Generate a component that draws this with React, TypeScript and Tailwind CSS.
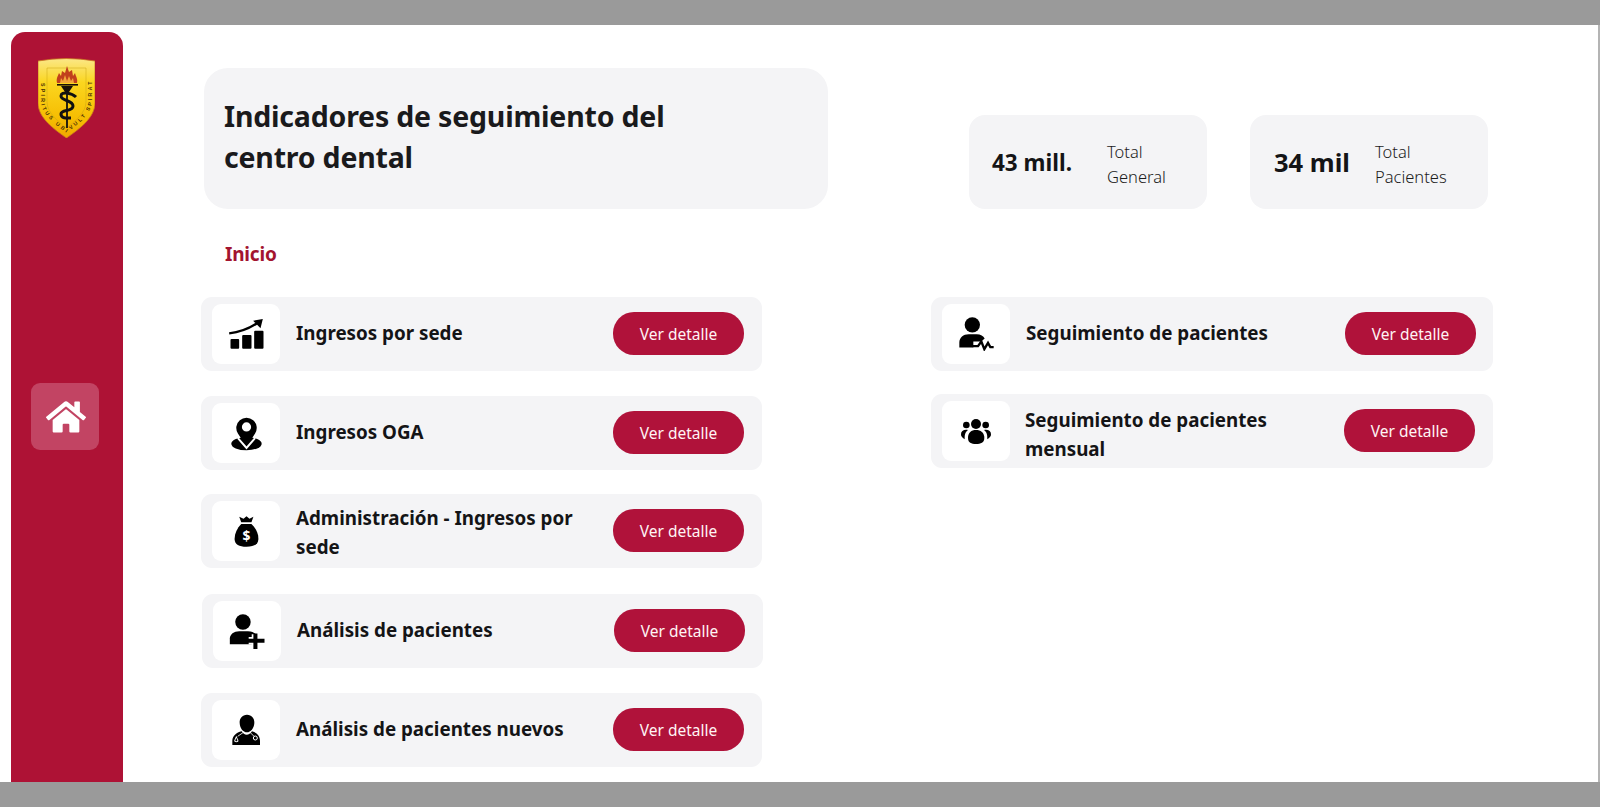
import React from "react";
import { FaHome } from "react-icons/fa";

const font = "[font-family:'Noto_Sans',sans-serif]";

function ChartIcon() {
  return (
    <svg width="35" height="30" viewBox="118 95 104 90" fill="#000">
      <rect x="122" y="155" width="26" height="29" rx="3" />
      <rect x="157" y="143" width="28" height="41" rx="3" />
      <rect x="193" y="130" width="28" height="54" rx="3" />
      <path d="M118 138C150 134 178 124 204 106" fill="none" stroke="#000" strokeWidth="7" />
      <path d="M190 100L219 95L212 123Z" />
    </svg>
  );
}
function PinIcon() {
  return (
    <svg width="31" height="35" viewBox="122 384 94 104" fill="#000">
      <ellipse cx="169" cy="467" rx="46" ry="20" />
      <path fillRule="evenodd" d="M169 476L143 436A31 31 0 1 1 195 436ZM169 402A14 14 0 1 0 169.010 430A14 14 0 1 0 169 402Z" />
      <path d="M143 450L169 480L195 450" fill="none" stroke="#fff" strokeWidth="6" />
      <path d="M146 436L169 472L192 436Z" />
    </svg>
  );
}
function BagIcon() {
  return (
    <svg width="25" height="31" viewBox="132 84 74 94" fill="#000">
      <path d="M147 86L160 92L169 85L178 92L190 86L184 103H153Z" />
      <path d="M153 108H184C198 122 206 138 205 155C204 170 192 177 169 177C146 177 134 170 133 155C132 138 140 122 153 108Z" />
      <text x="169" y="159" textAnchor="middle" fontSize="42" fontWeight="700" fill="#fff" fontFamily="'Noto Sans',sans-serif">$</text>
    </svg>
  );
}
function UserPlusIcon() {
  return (
    <svg width="36" height="35" viewBox="120 377 106 104" fill="#000">
      <circle cx="161" cy="401" r="23" />
      <path d="M122 467V450C122 437 134 428 150 428H176C186 428 194 432 198 436V467Z" />
      <path d="M198 437V476M178 456.500H220" stroke="#fff" strokeWidth="22" fill="none" />
      <path d="M198 435V481M174 456.500H225" stroke="#000" strokeWidth="12" fill="none" />
    </svg>
  );
}
function DoctorIcon() {
  return (
    <svg width="28" height="32" viewBox="127 680 84 94" fill="#000">
      <path d="M172 681C186 681 195 692 194 706C193 722 183 734 172 734C160 734 151 722 150 706C149 692 158 681 172 681Z" />
      <path d="M128 772V760C128 745 140 735 156 731C160 738 165 741 171 741C177 741 183 738 187 731C202 735 211 745 211 760V772Z" />
      <path d="M140 744L134 758C131 766 149 766 146 758Z" fill="#fff" />
      <path d="M140 750L137 758C136 762 144 762 143 758Z" />
      <circle cx="197" cy="751" r="6" fill="none" stroke="#fff" strokeWidth="3" />
      <path d="M160 735L144 746M182 735L193 746" stroke="#fff" strokeWidth="2.500" fill="none" />
    </svg>
  );
}
function FollowIcon() {
  return (
    <svg width="35" height="34" viewBox="117 87 105 101" fill="#000">
      <circle cx="157" cy="110" r="23" />
      <path d="M118 178V163C118 148 130 138 146 138H170C182 138 190 143 194 151L184 160H160V178Z" />
      <path d="M158 174H174L184 160L193 183L204 164L211 177H221" fill="none" stroke="#000" strokeWidth="7" />
    </svg>
  );
}
function GroupIcon() {
  return (
    <svg width="30" height="25" viewBox="125 395 90 75" fill="#000">
      <circle cx="141" cy="413" r="10" />
      <circle cx="199" cy="413" r="10" />
      <path d="M125 441C125 431 133 426 146 428C136 436 136 444 136 456C128 451 125 447 125 441Z" />
      <path d="M215 441C215 431 207 426 194 428C204 436 204 444 204 456C212 451 215 447 215 441Z" />
      <circle cx="170" cy="410" r="15" />
      <path d="M146 452C146 436 156 428 170 428C184 428 195 436 195 452C195 466 184 470 170 470C156 470 146 466 146 452Z" />
    </svg>
  );
}

const L = "w-[561px] pr-[18px]";

function Row({ icon, label, cls, labelCls }: { icon: React.ReactNode; label: string; cls: string; labelCls: string }) {
  return (
    <div className={`flex h-[74px] items-center rounded-[11px] bg-[#f4f4f6] pl-[11px] ${cls}`}>
      <div className="flex h-[60px] w-[68px] shrink-0 items-center justify-center rounded-[9px] bg-white">{icon}</div>
      <div className={`text-[18.800px] font-bold leading-[29px] text-[#141416] ${labelCls}`}>{label}</div>
      <button className="mb-[2px] ml-auto h-[43px] w-[131px] shrink-0 rounded-[21px] bg-[#b0123a] pt-[4px] text-[15.500px] text-[#fff4f4]">Ver detalle</button>
    </div>
  );
}

function Stat({ value, valueCls, a, b, cls }: { value: string; valueCls: string; a: string; b: string; cls: string }) {
  return (
    <div className={`flex h-[94px] w-[238px] items-center rounded-[16px] bg-[#f4f4f6] ${cls}`}>
      <div className={`font-bold text-[#141416] ${valueCls}`}>{value}</div>
      <div className="mt-[4px] text-[16.500px] font-light leading-[25px] text-[#1c1c1c]">
        {a}
        <br />
        {b}
      </div>
    </div>
  );
}

function Shield() {
  return (
    <svg width="57" height="80" viewBox="0 0 57 80">
      <defs>
        <linearGradient id="g" x1="0" y1="0" x2="0" y2="1">
          <stop offset="0" stopColor="#fbe787" />
          <stop offset=".3" stopColor="#fbd61f" />
          <stop offset=".75" stopColor="#f6bd02" />
          <stop offset="1" stopColor="#f0a800" />
        </linearGradient>
      </defs>
      <path d="M0 3Q28 -2 57 3V45C57 60 40 72 28.500 80C17 72 0 60 0 45Z" fill="url(#g)" stroke="#c9781e" strokeWidth=".8" />
      <path d="M9 10H48V44C48 55 36 64 28.500 70C21 64 9 55 9 44Z" fill="none" stroke="#c9a416" strokeWidth=".5" />
      <path d="M19 25C18 20 20 18 21 15L23 18L24 13L27 15L29 8L31 14L34 12L35 18L37 15C38 19 40 21 39 25Z" fill="#c1401c" />
      <path d="M22 25L23 20L25 23L27 17L29 23L31 18L33 23L35 20L36 25Z" fill="#f2a63a" />
      <rect x="19" y="26" width="21" height="1.600" fill="#1a1208" />
      <path d="M23 28H35L31 34H27Z" fill="#1a1208" />
      <path d="M29 32V70" stroke="#111" strokeWidth="1.800" />
      <path d="M38 39C34 35 23 33 23 38C23 43 35 42 35 48C35 54 23 51 23 56C23 61 30 60 33 60" fill="none" stroke="#111" strokeWidth="3" />
      <path id="arc" d="M3 25V44C4 57 19 68 28.500 75C38 68 53 57 54 44V25" fill="none" />
      <text fontSize="5.200" fontWeight="700" fill="#4a3205" fontFamily="'Liberation Sans',sans-serif">
        <textPath href="#arc" textLength="122" lengthAdjust="spacing">SPIRITUS UBI VULT SPIRAT</textPath>
      </text>
    </svg>
  );
}

export default function App() {
  return (
    <div className={`flex h-[807px] w-[1600px] flex-col overflow-hidden bg-white ${font}`}>
      <div className="h-[25px] shrink-0 bg-[#9a9a9a]" />
      <div className="flex min-h-0 flex-1 overflow-hidden bg-white">
        <aside className="ml-[11px] mt-[7px] flex w-[112px] shrink-0 flex-col items-center rounded-t-[14px] bg-[#ae1235]">
          <div className="ml-[-1px] mt-[26px]">
            <Shield />
          </div>
          <div className="ml-[-5px] mt-[245px] flex h-[67px] w-[68px] items-center justify-center rounded-[9px] bg-[#c24463]">
            <FaHome className="ml-[2px] text-white" size={40} />
          </div>
        </aside>
        <main className="ml-[78px] flex flex-1 flex-col">
          <div className="ml-[3px] mt-[43px] flex items-end">
            <div className="flex h-[141px] w-[624px] items-center rounded-[24px] bg-[#f4f4f6] pb-[4px] pl-[20px]">
              <h1 className="text-[28.500px] font-bold leading-[41px] tracking-[-0.2px] text-[#1a1a1c]">
                Indicadores de seguimiento del
                <br />
                centro dental
              </h1>
            </div>
            <Stat cls="ml-[141px]" value="43 mill." valueCls="ml-[23px] mt-[2px] w-[115px] text-[22.500px]" a="Total" b="General" />
            <Stat cls="ml-[43px]" value="34 mil" valueCls="ml-[24px] w-[101px] text-[25.500px]" a="Total" b="Pacientes" />
          </div>
          <div className="ml-[24px] mt-[31px] text-[19px] font-bold leading-[28px] tracking-[-0.2px] text-[#a3142f]">Inicio</div>
          <div className="mt-[29px] flex items-start">
            <div className="flex flex-col">
              <Row cls={L} labelCls="mb-[1px] ml-[16px]" icon={<ChartIcon />} label="Ingresos por sede" />
              <Row cls={`${L} mt-[25px]`} labelCls="mb-[1px] ml-[16px]" icon={<PinIcon />} label="Ingresos OGA" />
              <Row cls={`${L} mt-[24px]`} labelCls="ml-[16px] w-[300px] pt-[3px]" icon={<BagIcon />} label="Administración - Ingresos por sede" />
              <Row cls={`${L} ml-[1px] mt-[26px]`} labelCls="mb-[1px] ml-[16px]" icon={<UserPlusIcon />} label="Análisis de pacientes" />
              <Row cls={`${L} mt-[25px]`} labelCls="mb-[1px] ml-[16px]" icon={<DoctorIcon />} label="Análisis de pacientes nuevos" />
            </div>
            <div className="ml-[168px] flex flex-col">
              <Row cls="w-[562px] pr-[17px]" labelCls="mb-[1px] ml-[16px]" icon={<FollowIcon />} label="Seguimiento de pacientes" />
              <Row cls="mt-[23px] w-[562px] pr-[18px]" labelCls="ml-[15px] w-[300px] pt-[8px]" icon={<GroupIcon />} label="Seguimiento de pacientes mensual" />
            </div>
          </div>
        </main>
        <div className="w-[2px] shrink-0 bg-[#b4b4b4]" />
      </div>
      <div className="h-[25px] shrink-0 bg-[#9a9a9a]" />
    </div>
  );
}
